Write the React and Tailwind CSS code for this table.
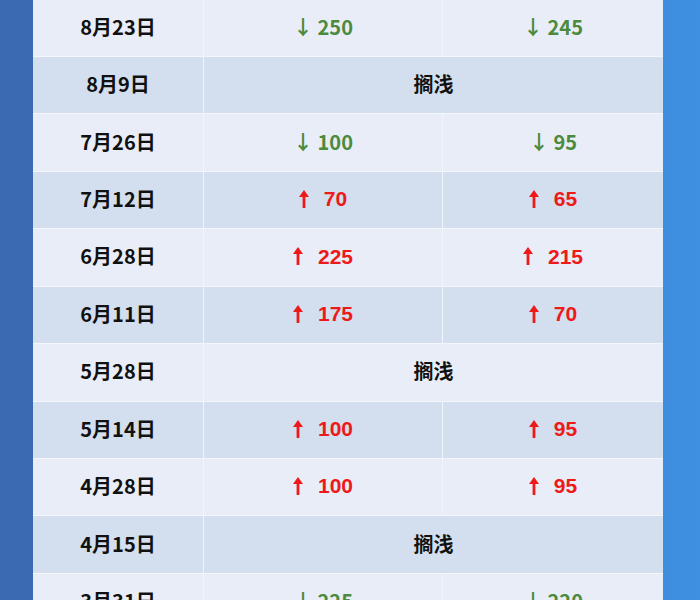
import React from "react";

const rows = [
  { d: "8月23日", a: ["down", "250"], b: ["down", "245"], dark: false },
  { d: "8月9日", stall: true, dark: true },
  { d: "7月26日", a: ["down", "100"], b: ["down", "95"], dark: false },
  { d: "7月12日", a: ["up", "70"], b: ["up", "65"], dark: true },
  { d: "6月28日", a: ["up", "225"], b: ["up", "215"], dark: false },
  { d: "6月11日", a: ["up", "175"], b: ["up", "70"], dark: true },
  { d: "5月28日", stall: true, dark: false },
  { d: "5月14日", a: ["up", "100"], b: ["up", "95"], dark: true },
  { d: "4月28日", a: ["up", "100"], b: ["up", "95"], dark: false },
  { d: "4月15日", stall: true, dark: true },
  { d: "3月31日", a: ["down", "225"], b: ["down", "220"], dark: false },
];

function UpArrow() {
  return (
    <svg width="10" height="18" viewBox="0 0 10 18" className="block">
      <polygon points="5,0 10,7 6.4,7 6.4,18 3.6,18 3.6,7 0,7" fill="#ee1a1a" />
    </svg>
  );
}

function Val({ v }) {
  const [dir, n] = v;
  if (dir === "down") {
    return (
      <span className="text-[#4c8a3c] font-bold text-[20px]" style={{ fontFamily: '"Noto Sans CJK SC", "Noto Sans", sans-serif' }}>
        ↓ {n}
      </span>
    );
  }
  return (
    <span className="text-[#ee1a1a] font-bold text-[21px] flex items-center gap-[15px]" style={{ fontFamily: '"Liberation Sans", Arial, sans-serif' }}>
      <UpArrow />
      <span>{n}</span>
    </span>
  );
}

export default function App() {
  return (
    <div className="w-[700px] h-[600px] overflow-hidden bg-gradient-to-r from-[#3b69b2] via-[#3c78c6] to-[#3f90e1]">
      <div className="ml-[33px] w-[630px] mt-[-1.5px] flex flex-col" style={{ fontFamily: '"Noto Sans CJK SC", sans-serif' }}>
        {rows.map((r, i) => (
          <div
            key={i}
            className={`flex h-[57.44px] shrink-0 border-t-[1.5px] border-[#f3f6fb] pb-[2px] ${r.dark ? "bg-[#d3dfee]" : "bg-[#e9edf8]"}`}
          >
            <div className="w-[171px] flex items-center justify-center border-r-[1.5px] border-[#f1f4fa] mb-[-2px] pb-[2px] font-bold text-[20px] text-[#111]">
              {r.d}
            </div>
            {r.stall ? (
              <div className="flex-1 flex items-center justify-center font-bold text-[20px] text-[#111]">
                搁浅
              </div>
            ) : (
              <>
                <div className="w-[239px] flex items-center justify-center border-r-[1.5px] border-[#f1f4fa] mb-[-2px] pb-[2px]">
                  <Val v={r.a} />
                </div>
                <div className="flex-1 flex items-center justify-center">
                  <Val v={r.b} />
                </div>
              </>
            )}
          </div>
        ))}
      </div>
    </div>
  );
}
